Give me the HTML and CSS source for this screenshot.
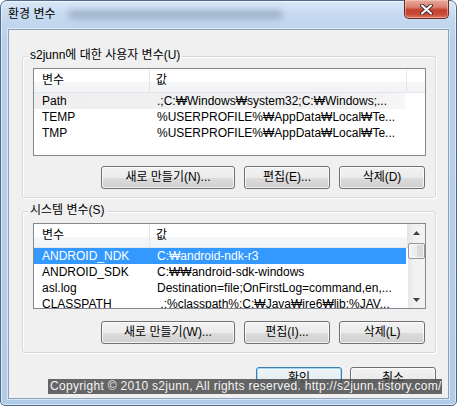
FILE: index.html
```html
<!DOCTYPE html>
<html lang="ko">
<head>
<meta charset="utf-8">
<title>환경 변수</title>
<link rel="stylesheet" href="styles.css">
</head>
<body>
<div class="window">
  <div class="titlebar">
    <span class="title">환경 변수</span>
    <span class="title-blur"></span>
    <button class="close" aria-label="닫기">
      <svg width="13" height="11" viewBox="0 0 13 11">
        <path d="M2 1.5 L11 9.5 M11 1.5 L2 9.5" stroke="#4a3030" stroke-width="4" stroke-linecap="round"/>
        <path d="M2 1.5 L11 9.5 M11 1.5 L2 9.5" stroke="#ffffff" stroke-width="2" stroke-linecap="round"/>
      </svg>
    </button>
  </div>
  <div class="client">
    <div class="group group-user">
      <div class="group-label">s2junn에 대한 사용자 변수(U)</div>
      <div class="list">
        <div class="list-main">
          <div class="header cols3">
            <div class="hcell">변수</div>
            <div class="hcell hcell2">값</div>
            <div class="hcell hcell3"></div>
          </div>
          <div class="rows">
            <div class="row hot"><span class="c1">Path</span><span class="c2">.;C:₩Windows₩system32;C:₩Windows;...</span></div>
            <div class="row"><span class="c1">TEMP</span><span class="c2">%USERPROFILE%₩AppData₩Local₩Te...</span></div>
            <div class="row"><span class="c1">TMP</span><span class="c2">%USERPROFILE%₩AppData₩Local₩Te...</span></div>
          </div>
        </div>
      </div>
      <div class="btnrow">
        <button class="btn w-new">새로 만들기(N)...</button>
        <button class="btn w-86">편집(E)...</button>
        <button class="btn w-86">삭제(D)</button>
      </div>
    </div>

    <div class="group group-sys">
      <div class="group-label">시스템 변수(S)</div>
      <div class="list list-sys">
        <div class="list-main">
          <div class="header cols2">
            <div class="hcell">변수</div>
            <div class="hcell hcell2">값</div>
          </div>
          <div class="rows">
            <div class="row selected"><span class="c1">ANDROID_NDK</span><span class="c2">C:₩android-ndk-r3</span></div>
            <div class="row"><span class="c1">ANDROID_SDK</span><span class="c2">C:₩₩android-sdk-windows</span></div>
            <div class="row"><span class="c1">asl.log</span><span class="c2">Destination=file;OnFirstLog=command,en,...</span></div>
            <div class="row"><span class="c1">CLASSPATH</span><span class="c2">&nbsp;.;%classpath%;C:₩Java₩jre6₩lib;%JAV...</span></div>
          </div>
        </div>
        <div class="scrollbar">
          <div class="sb-arrow"><svg width="7" height="4" viewBox="0 0 7 4"><path d="M0 4 L3.5 0 L7 4 Z" fill="#404040"/></svg></div>
          <div class="sb-thumb"></div>
          <div class="sb-track"></div>
          <div class="sb-arrow"><svg width="7" height="4" viewBox="0 0 7 4"><path d="M0 0 L3.5 4 L7 0 Z" fill="#404040"/></svg></div>
        </div>
      </div>
      <div class="btnrow btnrow-sys">
        <button class="btn w-new">새로 만들기(W)...</button>
        <button class="btn w-86">편집(I)...</button>
        <button class="btn w-86">삭제(L)</button>
      </div>
    </div>

    <div class="dlgrow">
      <button class="btn w-86 default">확인</button>
      <button class="btn w-86">취소</button>
    </div>
  </div>
</div>
<div class="copyright">Copyright © 2010 s2junn, All rights reserved. http://s2junn.tistory.com/</div>
</body>
</html>
```
FILE: styles.css
```css
html, body {
  margin: 0;
  padding: 0;
}
body {
  position: relative;
  width: 457px;
  height: 406px;
  overflow: hidden;
  background: #ffffff;
  font-family: "Liberation Sans", "Noto Sans CJK KR", sans-serif;
  font-size: 12px;
  color: #000;
}
.window {
  box-sizing: border-box;
  width: 457px;
  height: 406px;
  border: 1px solid #4f6a8c;
  border-radius: 7px 7px 5px 5px;
  background: linear-gradient(180deg, #dae8f6 0px, #c6daf0 14px, #b8d0eb 40px, #b2cbe8 100%);
  box-shadow: inset 0 0 0 1px rgba(255,255,255,0.55);
  padding: 0 7px 6px 7px;
  display: flex;
  flex-direction: column;
}
.titlebar {
  height: 28px;
  display: flex;
  align-items: flex-start;
}
.title {
  margin-top: 6px;
  line-height: 15px;
  font-size: 12px;
}
.title-blur {
  width: 215px;
  height: 9px;
  margin: 9px 0 0 12px;
  background: rgba(70, 90, 120, 0.3);
  border-radius: 5px;
  filter: blur(3px);
}
.close {
  margin: -1px 0 0 auto;
  width: 45px;
  height: 19px;
  padding: 0;
  border: 1px solid #6b2d2a;
  border-top: none;
  border-radius: 0 0 5px 5px;
  background: linear-gradient(180deg, #e9a99c 0%, #d9806f 40%, #c4412f 55%, #c94b35 80%, #dc7a5f 100%);
  box-shadow: inset 0 0 0 1px rgba(255,220,210,0.45);
  display: flex;
  align-items: center;
  justify-content: center;
}
.client {
  flex: 1;
  background: #f0f0f0;
  border: 1px solid #8aa2bf;
  box-shadow: 0 0 0 1px rgba(255,255,255,0.5);
  display: flex;
  flex-direction: column;
}
.group {
  margin: 0 12px 0 13px;
  border: 1px solid #d5d9dd;
  border-radius: 3px;
  box-shadow: inset 1px 1px 0 #fff, 1px 1px 0 #fff;
  padding: 11px 9px 8px 10px;
}
.group-user {
  margin-top: 26px;
}
.group-sys {
  margin-top: 13px;
}
.group-label {
  width: fit-content;
  height: 14px;
  line-height: 14px;
  margin: -20px 0 6px -5px;
  padding: 0 2px;
  background: #f0f0f0;
  white-space: nowrap;
}
.list {
  height: 86px;
  border: 1px solid #828790;
  background: #fff;
  display: flex;
  overflow: hidden;
}
.list-sys {
  height: 84px;
}
.list-main {
  flex: 1;
  min-width: 0;
  overflow: hidden;
}
.header {
  display: grid;
  height: 23px;
  border-bottom: 1px solid #e3e6ea;
  background: linear-gradient(180deg, #ffffff 0%, #ffffff 55%, #f6f7f9 56%, #f2f3f5 100%);
}
.cols3 { grid-template-columns: 116px 257px 1fr; }
.cols2 { grid-template-columns: 116px 1fr; }
.hcell {
  line-height: 23px;
  padding-left: 8px;
  border-right: 1px solid #e5e5e5;
  white-space: nowrap;
}
.hcell2 { padding-left: 6px; }
.hcell3 { border-right: none; }
.rows {
  display: flex;
  flex-direction: column;
}
.row {
  display: grid;
  grid-template-columns: 116px 257px;
  height: 16px;
  line-height: 16px;
  white-space: nowrap;
}
.group-sys .row { grid-template-columns: 116px 256px; }
.row.hot {
  background: linear-gradient(90deg, #efefef 0%, #f1f1f1 90%, #f7f7f7 100%);
  width: 371px;
}
.row.selected {
  background: #3399ff;
  color: #fff;
  width: 372px;
}
.c1 {
  padding-left: 8px;
  overflow: hidden;
}
.c2 {
  padding-left: 7px;
  overflow: hidden;
}
.scrollbar {
  width: 17px;
  display: flex;
  flex-direction: column;
  background: linear-gradient(90deg, #e6e6e6 0%, #f2f2f2 40%, #f2f2f2 100%);
}
.sb-arrow {
  height: 17px;
  display: flex;
  align-items: center;
  justify-content: center;
}
.sb-thumb {
  height: 16px;
  margin: 2px 0 0 0;
  border: 1px solid #979797;
  border-radius: 2px;
  box-sizing: border-box;
  background: linear-gradient(90deg, #f4f4f4 0%, #eaeaea 50%, #dedede 51%, #d6d6d6 100%);
  box-shadow: inset 0 0 0 1px rgba(255,255,255,0.7);
}
.sb-track {
  flex: 1;
}
.btnrow {
  display: flex;
  justify-content: flex-end;
  gap: 9px;
  margin: 10px 1px 0 0;
}
.btnrow-sys {
  margin-top: 12px;
}
.btn {
  height: 23px;
  padding: 0;
  border: 1px solid #707070;
  border-radius: 3px;
  background: linear-gradient(180deg, #f2f2f2 0%, #ebebeb 50%, #dddddd 51%, #cfcfcf 100%);
  box-shadow: inset 0 0 0 1px rgba(255,255,255,0.75);
  font-family: "Liberation Sans", "Noto Sans CJK KR", sans-serif;
  font-size: 12px;
  color: #000;
  line-height: 21px;
  white-space: nowrap;
}
.w-new { width: 134px; }
.w-86 { width: 86px; }
.btn.default {
  border-color: #3c7fb1;
  box-shadow: inset 0 0 0 1px #9fd6f5, inset 0 0 0 2px rgba(255,255,255,0.4);
  background: linear-gradient(180deg, #eef4f8 0%, #e6eef3 50%, #d8e3ea 51%, #cbd8e1 100%);
}
.dlgrow {
  display: flex;
  justify-content: flex-end;
  gap: 8px;
  margin: 14px 12px 0 0;
}
.copyright {
  position: absolute;
  left: 48px;
  top: 379px;
  width: 394px;
  height: 15px;
  box-sizing: border-box;
  padding-left: 2px;
  background: rgba(78, 78, 78, 0.86);
  color: #f4f4f4;
  font-family: "Liberation Sans", sans-serif;
  font-size: 12px;
  letter-spacing: 0.3px;
  line-height: 15px;
  white-space: nowrap;
  overflow: hidden;
}
```
